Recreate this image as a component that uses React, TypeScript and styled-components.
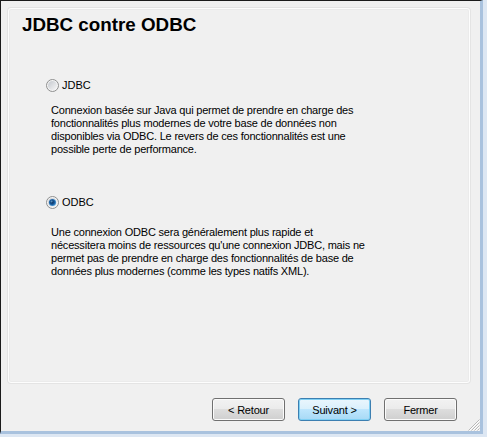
import { useId } from "react";
import styled, { createGlobalStyle } from "styled-components";

const GlobalStyle = createGlobalStyle`
  html, body {
    margin: 0;
    padding: 0;
    background: #f0f0f0;
  }
  body {
    font-family: "Liberation Sans", Arial, sans-serif;
    color: #000;
  }
`;

const Frame = styled.div`
  width: 487px;
  height: 437px;
  box-sizing: border-box;
  border-right: 4px solid #dde7f3;
  border-bottom: 3px solid #dde7f3;
`;

const Dialog = styled.div`
  position: relative;
  height: 100%;
  box-sizing: border-box;
  border-left: 1px solid #1b1b1b;
  border-top: 1px solid #1b1b1b;
  border-right: 3px solid #a9c2de;
  border-bottom: 3px solid #a9c2de;
  background: #f0f0f0;
  display: flex;
  flex-direction: column;
  padding: 7px 0 0 7px;
`;

const Panel = styled.div`
  width: 462px;
  height: 375px;
  box-sizing: border-box;
  border: 1px solid #fdfdfd;
  border-radius: 3px;
  box-shadow: 0 0 0 1px #e4e4e4, inset 0 0 0 1px #ebebeb;
  display: flex;
  flex-direction: column;
`;

const Title = styled.h1`
  margin: 4.5px 0 0 13px;
  font-size: 18.8px;
  line-height: 22px;
  font-weight: bold;
`;

const RadioRow = styled.label<{ $top: number }>`
  display: flex;
  align-items: center;
  gap: 3px;
  height: 13px;
  margin: ${(p) => p.$top}px 0 0 37px;
  font-size: 11px;
  line-height: 13px;
`;

const Text = styled.p<{ $top: number }>`
  margin: ${(p) => p.$top}px 0 0 42px;
  font-size: 11px;
  line-height: 13px;
  letter-spacing: -0.2px;
  white-space: nowrap;
`;

const Line = styled.span`
  display: block;
`;

const ButtonRow = styled.div`
  display: flex;
  justify-content: flex-end;
  gap: 13px;
  margin-top: 15px;
  padding-right: 23px;
`;

const Button = styled.button<{ $default?: boolean }>`
  width: 73px;
  height: 23px;
  box-sizing: border-box;
  padding: 0;
  font-family: "Liberation Sans", Arial, sans-serif;
  font-size: 11px;
  letter-spacing: -0.2px;
  color: #000;
  border-radius: 3px;
  border: 1px solid ${(p) => (p.$default ? "#3c7fb1" : "#707070")};
  background: ${(p) =>
    p.$default
      ? "linear-gradient(#eaf6fd 0%, #d9f0fc 50%, #bee6fd 50%, #a7d9f5 100%)"
      : "linear-gradient(#f2f2f2 0%, #ebebeb 50%, #dddddd 50%, #cfcfcf 100%)"};
  box-shadow: inset 0 0 0 1px
    ${(p) => (p.$default ? "#7fd0f4" : "#fbfbfb")};
`;

const Grip = styled.svg`
  position: absolute;
  right: 0;
  bottom: 0;
`;

const Radio = ({ checked }: { checked?: boolean }) => {
  const id = useId().replace(/:/g, "");
  return (
    <svg width="13" height="13" viewBox="0 0 13 13">
      <defs>
        <linearGradient id={`r${id}`} x1="0" y1="0" x2="1" y2="1">
          <stop offset="0" stopColor="#c4c8ce" />
          <stop offset="1" stopColor="#f7f7f7" />
        </linearGradient>
        <radialGradient id={`d${id}`} cx="0.45" cy="0.45" r="0.6">
          <stop offset="0" stopColor="#082a55" />
          <stop offset="0.55" stopColor="#18599b" />
          <stop offset="1" stopColor="#58aee8" />
        </radialGradient>
      </defs>
      <circle cx="6.5" cy="6.5" r="6" fill="#f4f4f4" stroke="#8e8f8f" />
      <circle cx="6.5" cy="6.5" r="4.5" fill={`url(#r${id})`} />
      {checked && (
        <>
          <circle cx="6.5" cy="6.5" r="3.6" fill={`url(#d${id})`} />
          <circle cx="5.6" cy="5.4" r="1" fill="#8ccaf2" opacity="0.6" />
        </>
      )}
    </svg>
  );
};

export default function App() {
  return (
    <>
      <GlobalStyle />
      <Frame>
        <Dialog>
          <Panel>
            <Title>JDBC contre ODBC</Title>
            <RadioRow $top={43.5}>
              <Radio />
              JDBC
            </RadioRow>
            <Text $top={12}>
              <Line>Connexion basée sur Java qui permet de prendre en charge des</Line>
              <Line>fonctionnalités plus modernes de votre base de données non</Line>
              <Line>disponibles via ODBC. Le revers de ces fonctionnalités est une</Line>
              <Line>possible perte de performance.</Line>
            </Text>
            <RadioRow $top={40}>
              <Radio checked />
              ODBC
            </RadioRow>
            <Text $top={17}>
              <Line>Une connexion ODBC sera généralement plus rapide et</Line>
              <Line>nécessitera moins de ressources qu'une connexion JDBC, mais ne</Line>
              <Line>permet pas de prendre en charge des fonctionnalités de base de</Line>
              <Line>données plus modernes (comme les types natifs XML).</Line>
            </Text>
          </Panel>
          <ButtonRow>
            <Button>&lt; Retour</Button>
            <Button $default>Suivant &gt;</Button>
            <Button>Fermer</Button>
          </ButtonRow>
          <Grip width="12" height="12" viewBox="0 0 12 12">
            <g stroke="#b8b8b8" strokeWidth="1">
              <line x1="11.5" y1="0.5" x2="0.5" y2="11.5" />
              <line x1="11.5" y1="3.5" x2="3.5" y2="11.5" />
              <line x1="11.5" y1="6.5" x2="6.5" y2="11.5" />
              <line x1="11.5" y1="9.5" x2="9.5" y2="11.5" />
            </g>
            <g stroke="#ffffff" strokeWidth="1">
              <line x1="11.5" y1="1.5" x2="1.5" y2="11.5" />
              <line x1="11.5" y1="4.5" x2="4.5" y2="11.5" />
              <line x1="11.5" y1="7.5" x2="7.5" y2="11.5" />
              <line x1="11.5" y1="10.5" x2="10.5" y2="11.5" />
            </g>
          </Grip>
        </Dialog>
      </Frame>
    </>
  );
}
